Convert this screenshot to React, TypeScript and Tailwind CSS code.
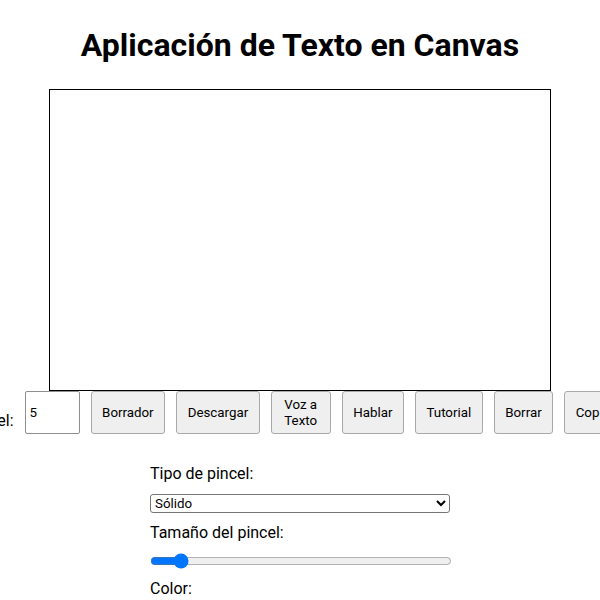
import { useState } from "react";

const buttons = ["Borrador", "Descargar", "Voz a Texto", "Hablar", "Tutorial", "Borrar", "Copiar", "Pegar"];

export default function App() {
    const [size, setSize] = useState(5);
    const [brush, setBrush] = useState("solido");

    return (
        <div className="min-h-screen bg-white text-black font-['Roboto',sans-serif] flex flex-col items-center overflow-hidden">
            <h1 className="mt-[22px] mb-[21px] text-[32px] leading-[46px] font-bold text-center">
                Aplicación de Texto en Canvas
            </h1>

            <canvas width={500} height={300} className="block border border-black bg-white shrink-0" />

            {/* Controls */}
            <div className="w-full flex justify-center gap-[11px]">
                <label className="shrink-0 text-[16px] leading-[19px] pt-[1px] text-left">
                    <span className="block whitespace-nowrap">Tamaño del</span>
                    <span className="block whitespace-nowrap">texto del pincel:</span>
                </label>
                <input
                    type="number"
                    value={size}
                    onChange={(e) => setSize(Number(e.target.value))}
                    className="shrink-0 w-[55px] border border-[#8f8f8f] rounded-[2px] px-[4px] text-[13.33px] bg-white"
                />
                {buttons.map((b) => (
                    <button
                        key={b}
                        className={`shrink-0 px-[10.5px] py-[5px] border border-[#a9a9a9] rounded-[3px] bg-[#efefef] text-[13.33px] leading-[15.5px] text-black ${
                            b === "Voz a Texto" ? "w-[60px]" : "whitespace-nowrap"
                        } ${b === "Pegar" ? "min-w-[61px]" : ""}`}
                    >
                        {b}
                    </button>
                ))}
            </div>

            {/* Brush settings */}
            <div className="w-[300px] mt-[28px] flex flex-col gap-2 text-left">
                <label className="text-[16px] leading-6">Tipo de pincel:</label>
                <select
                    value={brush}
                    onChange={(e) => setBrush(e.target.value)}
                    className="w-[300px] h-[19px] border border-[#767676] rounded-[3px] bg-white text-[13.33px] leading-[16px]"
                >
                    <option value="solido">Sólido</option>
                    <option value="punteado">Punteado</option>
                    <option value="spray">Spray</option>
                </select>
                <label className="text-[16px] leading-6">Tamaño del pincel:</label>
                <input
                    type="range"
                    min={1}
                    max={50}
                    value={size}
                    onChange={(e) => setSize(Number(e.target.value))}
                    className="w-[302px] h-[16px]"
                />
                <label className="text-[16px] leading-6">Color:</label>
                <input type="color" defaultValue="#000000" className="w-[50px] h-[27px]" />
            </div>
        </div>
    );
}
